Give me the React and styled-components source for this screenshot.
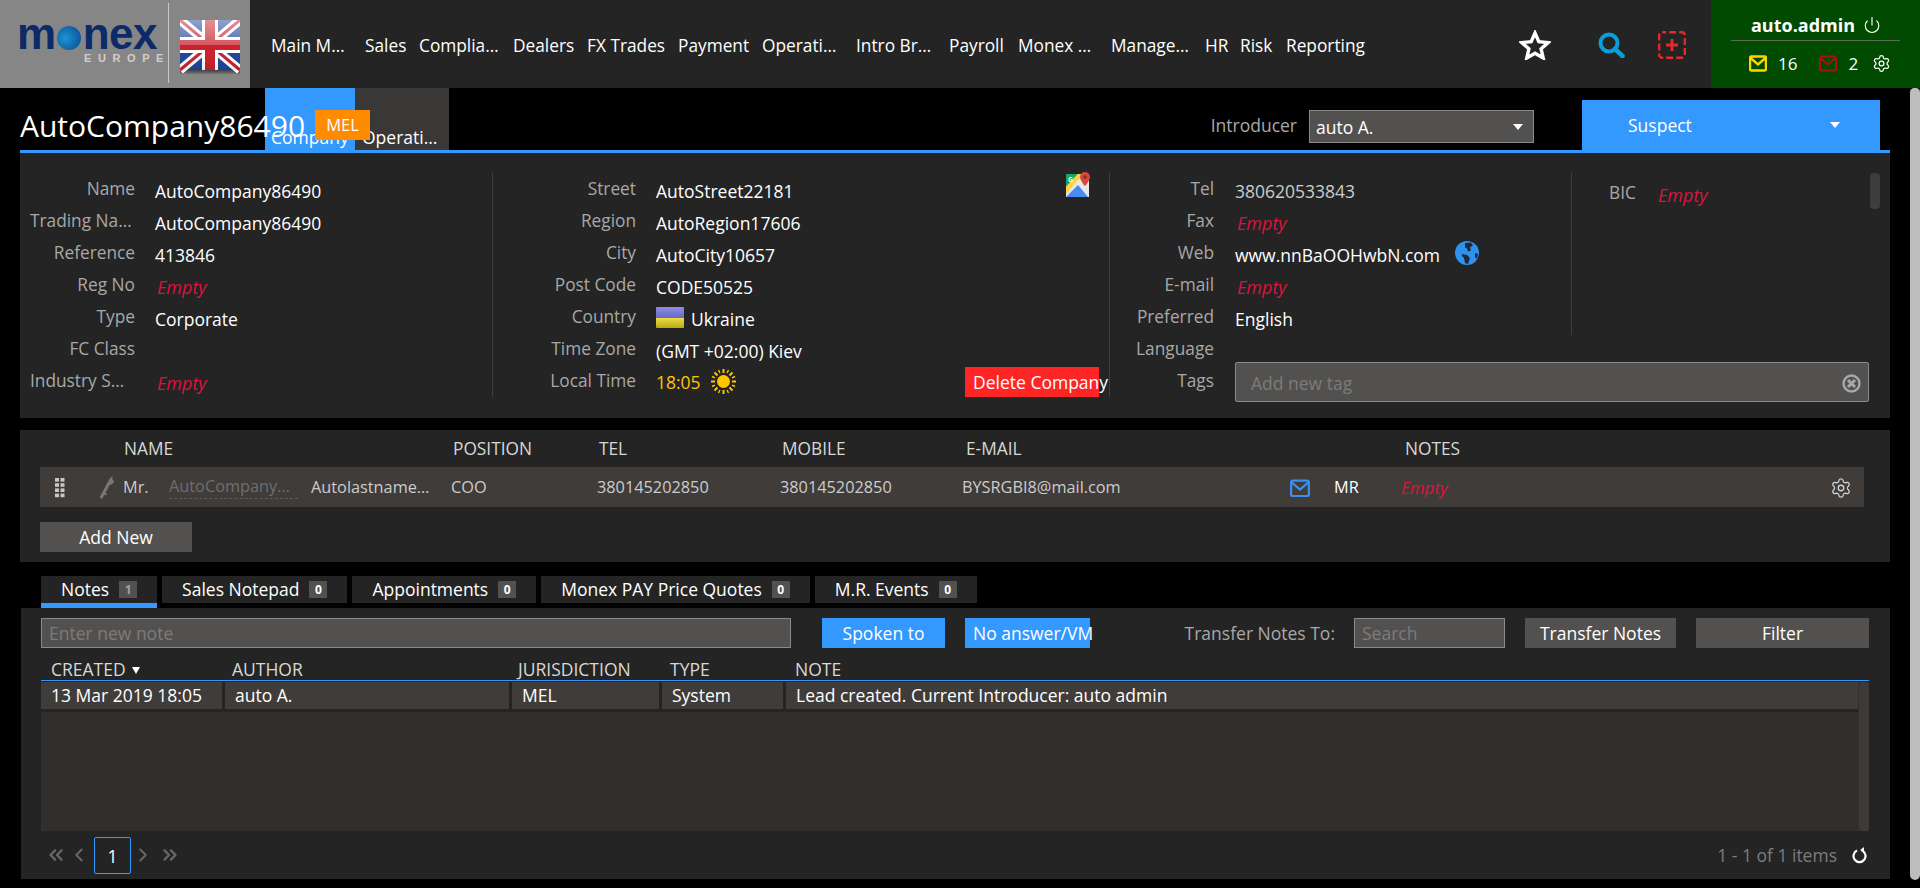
import React from "react";
import styled, { createGlobalStyle } from "styled-components";
import { ChevronLeft, ChevronRight, ChevronsLeft, ChevronsRight, Power, Settings } from "lucide-react";

const GlobalStyle = createGlobalStyle`
  html, body {
    margin: 0;
    height: 100%;
    overflow: hidden;
    background: #000;
  }
  body {
    font-family: "Open Sans", "Noto Sans", sans-serif;
    font-size: 17.5px;
    color: #fff;
  }
  * {
    box-sizing: border-box;
  }
`;

const Header = styled.header`
  display: flex;
  height: 88px;
  background: #242424;
`;

const Brand = styled.div`
  display: flex;
  flex: none;
  width: 250px;
  height: 88px;
  background: #868686;
`;

const LogoBox = styled.div`
  width: 169px;
  padding: 17px 0 0 17px;
  border-right: 1px solid #c8c8c8;
  margin: 3px 0 5px;
`;

const LogoWord = styled.div`
  display: flex;
  align-items: center;
  height: 28px;
  font-family: "Liberation Sans", sans-serif;
  font-weight: 700;
  font-size: 44px;
  line-height: 28px;
  letter-spacing: -0.5px;
  color: #0c2a68;
`;

const LogoDot = styled.span`
  width: 24px;
  height: 24px;
  margin: 8px 2px 0 1px;
  flex: none;
  border-radius: 50%;
  background: radial-gradient(circle at 35% 50%, #1a94d2, #0f5ea4 70%, #0c3f80);
`;

const LogoSub = styled.div`
  margin: 4px 0 0 67px;
  font-family: "Liberation Sans", sans-serif;
  font-size: 11px;
  font-weight: 700;
  letter-spacing: 6.6px;
  line-height: 12px;
  color: #cfcfcf;
`;

const FlagWrap = styled.div`
  margin: 20px 0 0 11px;
  line-height: 0;
`;

const Nav = styled.nav`
  display: flex;
  flex: 1;
  align-items: center;
  padding: 4px 0 0 16px;
`;

const NavItem = styled.div`
  flex: none;
  width: ${({ $w }) => ($w ? `${$w}px` : "auto")};
  padding: 0 5px;
  font-size: 17.3px;
  line-height: 22px;
  white-space: nowrap;
`;

const Tools = styled.div`
  display: flex;
  align-items: center;
  flex: none;
  padding: 2px 25px 0 0;
  line-height: 0;
`;

const ToolSlot = styled.div`
  margin-left: ${({ $gap }) => $gap}px;
  line-height: 0;
`;

const UserBox = styled.div`
  flex: none;
  width: 209px;
  background: #004b00;
  padding: 0 20px;
`;

const UserTop = styled.div`
  display: flex;
  align-items: center;
  height: 41px;
  padding: 9px 0 0 20px;
  border-bottom: 1px solid #5c6a5c;
  font-weight: 700;
  font-size: 18px;
  gap: 8px;
`;

const UserBottom = styled.div`
  display: flex;
  align-items: center;
  height: 44px;
  padding: 0 0 0 18px;
  font-size: 17px;
`;

const Count = styled.span`
  margin: 0 ${({ $right }) => $right}px 0 ${({ $left }) => $left}px;
`;

const Body = styled.div`
  display: flex;
  height: 800px;
`;

const Content = styled.main`
  flex: none;
  width: 1910px;
  padding: 0 20px;
`;

const ScrollTrack = styled.div`
  flex: none;
  width: 10px;
  height: 792px;
  background: #bdbdbd;
  border-radius: 5px 5px 6px 6px;
`;

const TitleBar = styled.div`
  display: flex;
  height: 62px;
`;

const TitleArea = styled.div`
  position: relative;
  z-index: 2;
  flex: none;
  width: 245px;
`;

const Title = styled.h1`
  margin: 0;
  padding-top: 19px;
  font-size: 30px;
  font-weight: 400;
  line-height: 38px;
  white-space: nowrap;
`;

const Badge = styled.div`
  position: absolute;
  left: 295px;
  top: 22px;
  width: 55px;
  height: 30px;
  background: #ff8c00;
  text-align: center;
  line-height: 30px;
  font-size: 16.5px;
`;

const PageTab = styled.div`
  flex: none;
  width: ${({ $w }) => $w}px;
  padding: 37px 0 0 ${({ $active }) => ($active ? "6px" : "7px")};
  line-height: 24px;
  overflow: hidden;
  white-space: nowrap;
  background: ${({ $active }) => ($active ? "#3399ff" : "#3a3836")};
`;

const IntroGroup = styled.div`
  display: flex;
  align-items: flex-start;
  margin-left: auto;
  padding-top: 22px;
`;

const IntroLabel = styled.span`
  margin-right: 12px;
  color: #a8a8a8;
  line-height: 30px;
`;

const Select = styled.div`
  display: flex;
  align-items: center;
  justify-content: space-between;
  width: 225px;
  height: 33px;
  padding: 0 10px 0 6px;
  background: #53514f;
  border: 1px solid #8a8a8a;
`;

const Caret = styled.span`
  width: 0;
  height: 0;
  border-left: 5px solid transparent;
  border-right: 5px solid transparent;
  border-top: 6px solid #fff;
`;

const StatusBox = styled.div`
  display: flex;
  align-items: center;
  justify-content: space-between;
  flex: none;
  width: 298px;
  height: 50px;
  margin: 12px 10px 0 48px;
  padding: 0 40px 0 46px;
  background: #3399ff;
`;

const InfoPanel = styled.section`
  display: flex;
  height: 268px;
  border-top: 3px solid #3399ff;
  padding-top: 20px;
  padding-right: 10px;
  background: #242424;
`;

const Column = styled.div`
  flex: none;
  width: ${({ $w }) => $w}px;
  height: ${({ $h }) => ($h ? `${$h}px` : "224px")};
  padding-top: ${({ $top }) => $top || 0}px;
  border-right: ${({ $line }) => ($line ? "1px solid #3e3e3e" : "none")};
`;

const Row = styled.div`
  display: flex;
  align-items: flex-start;
  height: 32px;
`;

const Label = styled.div`
  flex: none;
  width: ${({ $w }) => $w}px;
  padding: 6px 0 0 ${({ $cut }) => ($cut ? 10 : 0)}px;
  text-align: ${({ $cut }) => ($cut ? "left" : "right")};
  font-size: 17.3px;
  color: #a8a8a8;
  line-height: 20px;
  white-space: nowrap;
`;

const Value = styled.div`
  display: flex;
  align-items: center;
  margin-left: ${({ $gap }) => $gap || 20}px;
  padding-top: ${({ $gold }) => ($gold ? 7 : 8)}px;
  line-height: 20px;
  white-space: nowrap;
  color: ${({ $dim, $gold }) => ($gold ? "#ffc400" : $dim ? "#cccccc" : "#fff")};
`;

const Empty = styled.span`
  margin-left: ${({ $small }) => ($small ? 0 : 2)}px;
  font-style: italic;
  font-size: ${({ $small }) => ($small ? 17 : 18)}px;
  color: #dc143c;
`;

const InlineIcon = styled.span`
  margin: ${({ $m }) => $m};
  line-height: 0;
`;

const RowEnd = styled.div`
  margin: ${({ $top }) => $top}px ${({ $right }) => $right}px 0 auto;
  line-height: 0;
`;

const DangerButton = styled.div`
  width: 134px;
  height: 30px;
  padding-left: 8px;
  background: #ff2525;
  line-height: 30px;
  white-space: nowrap;
`;

const TagInput = styled.div`
  display: flex;
  align-items: center;
  justify-content: space-between;
  flex: none;
  width: 634px;
  height: 40px;
  margin: -3px 0 0 21px;
  padding: 2px 7px 0 15px;
  background: #53514f;
  border: 1px solid #8a8a8a;
  border-radius: 2px;
  color: #7c7c7c;
`;

const SideColumn = styled.div`
  display: flex;
  flex: none;
  width: 309px;
  height: 162px;
  border-left: 1px solid #3e3e3e;
`;

const SideThumb = styled.div`
  flex: none;
  width: 10px;
  height: 36px;
  margin-left: auto;
  border-radius: 4px;
  background: #3d3d3d;
`;

const ContactPanel = styled.section`
  height: 132px;
  margin-top: 12px;
  padding: 0 26px 0 20px;
  background: #242424;
`;

const ContactHead = styled.div`
  display: grid;
  grid-template-columns: 84px 329px 146px 183px 184px 439px 1fr;
  align-items: center;
  height: 37px;
  font-size: 17.3px;
  color: #d8d8d8;
`;

const ContactRow = styled.div`
  display: grid;
  grid-template-columns: 45px 23px 46px 142px 140px 146px 183px 182px 328px 44px 67px 1fr 34px;
  align-items: center;
  height: 40px;
  padding-left: 15px;
  background: #403c3a;
  color: #cccccc;
  font-size: 16.3px;
  white-space: nowrap;
`;

const IconCell = styled.div`
  display: flex;
  align-items: center;
  line-height: 0;
  padding-top: ${({ $top }) => $top || 0}px;
`;

const Muted = styled.span`
  width: 129px;
  padding-bottom: 1px;
  border-bottom: 1px dashed #5c5c5c;
  color: #6e6e6e;
`;

const Plain = styled.span`
  color: ${({ $white }) => ($white ? "#fff" : "#cccccc")};
`;

const GreyButton = styled.div`
  flex: none;
  width: ${({ $w }) => $w}px;
  height: 30px;
  margin: ${({ $m }) => $m || 0};
  background: #53514f;
  text-align: center;
  line-height: 30px;
`;

const TabStrip = styled.div`
  display: flex;
  gap: 5px;
  height: 32px;
  margin: 14px 0 0 21px;
`;

const NoteTab = styled.div`
  display: flex;
  align-items: center;
  gap: 10px;
  height: 32px;
  padding: 0 20px 7px;
  background: linear-gradient(#242424 27px, ${({ $active }) => ($active ? "#3399ff" : "#000")} 27px);
`;

const TabCount = styled.span`
  width: 18px;
  height: 17px;
  margin-top: 2px;
  background: #53514f;
  color: ${({ $active }) => ($active ? "#a0a0a0" : "#fff")};
  font-size: 12px;
  font-weight: 700;
  text-align: center;
  line-height: 18px;
`;

const NotesPanel = styled.section`
  height: 271px;
  margin-left: 1px;
  padding: 10px 21px 0 20px;
  background: #242424;
`;

const Toolbar = styled.div`
  display: flex;
  align-items: center;
  height: 30px;
`;

const TextBox = styled.div`
  flex: none;
  width: ${({ $w }) => $w}px;
  height: 30px;
  padding-left: 7px;
  background: #53514f;
  border: 1px solid #8a8a8a;
  color: #7c7c7c;
  line-height: 29px;
`;

const BlueButton = styled.div`
  flex: none;
  width: ${({ $w }) => $w}px;
  height: 30px;
  margin-left: ${({ $left }) => $left}px;
  padding-left: ${({ $pad }) => $pad || 0}px;
  background: #3399ff;
  text-align: ${({ $pad }) => ($pad ? "left" : "center")};
  line-height: 30px;
  white-space: nowrap;
`;

const TransferLabel = styled.span`
  margin: 0 19px 0 auto;
  color: #a8a8a8;
`;

const NotesHead = styled.div`
  display: grid;
  grid-template-columns: 181px 286px 152px 125px 1fr;
  align-items: center;
  height: 33px;
  margin-bottom: 1px;
  padding: 10px 0 0 10px;
  border-bottom: 1px solid #3399ff;
  color: #d8d8d8;
  line-height: 22px;
`;

const SortMark = styled.span`
  display: inline-block;
  width: 0;
  height: 0;
  margin-left: 6px;
  vertical-align: 2px;
  border-left: 4px solid transparent;
  border-right: 4px solid transparent;
  border-top: 7px solid #fff;
`;

const GridBody = styled.div`
  display: flex;
  height: 149px;
  background: #302f2d;
`;

const RowsArea = styled.div`
  flex: 1;
`;

const NoteRow = styled.div`
  display: grid;
  grid-template-columns: 181px 284px 147px 121px 1fr;
  gap: 3px;
  height: 30px;
  padding-bottom: 3px;
  background: #242424;
`;

const NoteCell = styled.div`
  padding-left: 10px;
  background: #403c3a;
  line-height: 27px;
  white-space: nowrap;
`;

const GridThumb = styled.div`
  flex: none;
  width: 10px;
  margin-left: 1px;
  border-radius: 4px;
  background: #3d3b39;
`;

const Pager = styled.div`
  display: flex;
  align-items: center;
  height: 48px;
  color: #666;
  line-height: 0;
`;

const PagerIcon = styled.span`
  margin: ${({ $m }) => $m};
  line-height: 0;
`;

const PageNumber = styled.div`
  width: 37px;
  height: 37px;
  margin: 0 1px 0 4px;
  border: 1px solid #3399ff;
  border-radius: 2px;
  color: #fff;
  text-align: center;
  line-height: 36px;
`;

const PagerInfo = styled.span`
  margin: 0 15px 0 auto;
  color: #7d7d7d;
  line-height: 20px;
`;

function UkFlag() {
  return (
    <svg width="60" height="54" viewBox="0 0 60 54">
      <defs>
        <linearGradient id="flagShade" x1="0" y1="0" x2="0" y2="1">
          <stop offset="0" stopColor="#fff" stopOpacity="0.5" />
          <stop offset="0.5" stopColor="#fff" stopOpacity="0.25" />
          <stop offset="0.51" stopColor="#fff" stopOpacity="0" />
          <stop offset="1" stopColor="#000" stopOpacity="0.08" />
        </linearGradient>
        <linearGradient id="flagFoot" x1="0" y1="0" x2="0" y2="1">
          <stop offset="0" stopColor="#333" />
          <stop offset="1" stopColor="#777" />
        </linearGradient>
      </defs>
      <rect x="0" y="49" width="60" height="5" fill="url(#flagFoot)" />
      <rect width="60" height="50" fill="#1d4597" />
      <path d="M0 0L60 50M60 0L0 50" stroke="#fff" strokeWidth="9" />
      <path d="M0 0L60 50M60 0L0 50" stroke="#c8202c" strokeWidth="3" />
      <path d="M30 0V50M0 25H60" stroke="#fff" strokeWidth="16" />
      <path d="M30 0V50M0 25H60" stroke="#c8202c" strokeWidth="10" />
      <rect width="60" height="50" fill="url(#flagShade)" />
    </svg>
  );
}

function StarIcon() {
  return (
    <svg width="32" height="30" viewBox="0 0 32 30">
      <path d="M16 3l3.8 8.7 9.4.9-7.1 6.2 2.1 9.2-8.2-4.8-8.2 4.8 2.1-9.2-7.1-6.2 9.4-.9z" fill="none" stroke="#fff" strokeWidth="3.4" strokeLinejoin="miter" />
    </svg>
  );
}

function SearchIcon() {
  return (
    <svg width="27" height="26" viewBox="0 0 27 26">
      <circle cx="11" cy="11" r="8.5" fill="none" stroke="#0a9fd8" strokeWidth="4" />
      <path d="M17 17l7.5 7" stroke="#0a9fd8" strokeWidth="4.5" strokeLinecap="round" />
    </svg>
  );
}

function AddIcon() {
  return (
    <svg width="28" height="28" viewBox="0 0 28 28">
      <rect x="1.2" y="1.2" width="25.6" height="25.6" rx="3" fill="none" stroke="#e02a2a" strokeWidth="2.4" strokeDasharray="7 3" strokeDashoffset="3" />
      <path d="M14 8v12M8 14h12" stroke="#e02a2a" strokeWidth="3" />
    </svg>
  );
}

function MailIcon({ color, size = 18, weight = 2 }) {
  return (
    <svg width={size} height={(size * 17) / 18} viewBox="0 0 18 17">
      <rect x="1" y="1.5" width="16" height="14" rx="1.5" fill="none" stroke={color} strokeWidth={weight} />
      <path d="M1.5 3l7.5 6.5L16.5 3" fill="none" stroke={color} strokeWidth={weight} />
    </svg>
  );
}

function MapPinIcon() {
  return (
    <svg width="25" height="25" viewBox="0 0 25 25">
      <rect y="2" width="23" height="23" fill="#e8e8e8" />
      <path d="M0 2h12L0 15z" fill="#1ea362" />
      <path d="M0 25L12 13l10 12z" fill="#4a8af4" />
      <path d="M0 15L12 2h5L0 22z" fill="#ffd23f" />
      <path d="M19 0a5 5 0 0 1 5 5c0 4-5 9-5 9s-5-5-5-9a5 5 0 0 1 5-5z" fill="#d9483b" />
      <circle cx="19" cy="5" r="1.8" fill="#8a2a22" />
      <text x="2" y="10" fontFamily="Open Sans" fontSize="7" fontWeight="700" fill="#fff">G</text>
    </svg>
  );
}

function UaFlag() {
  return (
    <svg width="28" height="21" viewBox="0 0 28 21">
      <defs>
        <linearGradient id="uaShade" x1="0" y1="0" x2="0" y2="1">
          <stop offset="0" stopColor="#8e8ee6" />
          <stop offset="0.5" stopColor="#6a6ac8" />
          <stop offset="0.51" stopColor="#f0e040" />
          <stop offset="1" stopColor="#b8a818" />
        </linearGradient>
      </defs>
      <rect width="28" height="21" rx="1" fill="url(#uaShade)" />
    </svg>
  );
}

function SunIcon() {
  return (
    <svg width="25" height="25" viewBox="0 0 25 25">
      <circle cx="12.5" cy="12.5" r="6.5" fill="#ffc400" />
      <g stroke="#ffc400" strokeWidth="2">
        <path d="M12.5 0v4M12.5 21v4M0 12.5h4M21 12.5h4M3.5 3.5l3 3M18.5 18.5l3 3M21.5 3.5l-3 3M6.5 18.5l-3 3" />
        <path d="M7.5 1l1.4 3M16.1 21l1.4 3M1 7.5l3 1.4M21 16.1l3 1.4M17.5 1l-1.4 3M8.9 21l-1.4 3M24 7.5l-3 1.4M4 16.1l-3 1.4" strokeWidth="1.4" />
      </g>
    </svg>
  );
}

function GlobeIcon() {
  return (
    <svg width="24" height="24" viewBox="0 0 24 24">
      <circle cx="12" cy="12" r="12" fill="#2f93ee" />
      <path d="M10 2l6-.5 2 3-3 2 1 3-3 1-1-3-2-1zM7 13l5 1 3 3-2 6-3-1-1-5-2-2zM20 12l3 1-1 5-2-2z" fill="#1f2a38" />
    </svg>
  );
}

function ClearIcon() {
  return (
    <svg width="19" height="19" viewBox="0 0 19 19">
      <circle cx="9.5" cy="9.5" r="8" fill="none" stroke="#a8a8a8" strokeWidth="2.4" />
      <path d="M6 6l7 7M13 6l-7 7" stroke="#a8a8a8" strokeWidth="3" />
    </svg>
  );
}

function DragIcon() {
  const dots = [];
  for (let r = 0; r < 4; r++) {
    for (let c = 0; c < 2; c++) {
      dots.push(<rect key={`${r}-${c}`} x={c * 5.5} y={r * 5.2} width="4" height="3.6" fill="#c8c8c8" />);
    }
  }
  return (
    <svg width="10" height="20" viewBox="0 0 10 20">
      {dots}
    </svg>
  );
}

function KeyIcon() {
  return (
    <svg width="14" height="24" viewBox="0 0 14 24">
      <path d="M1.5 22L9 8" stroke="#777" strokeWidth="3" strokeLinecap="round" />
      <path d="M9 10c-2-3 0-7 4-9-1 2-1 3 0 4l1 1c0 2-2 4-5 4z" fill="#777" />
      <path d="M3.5 18l3 1.5" stroke="#777" strokeWidth="2" />
    </svg>
  );
}

function RefreshIcon() {
  return (
    <svg width="15" height="17" viewBox="0 0 15 17">
      <path d="M5 3.6a6 6 0 1 0 5 0" fill="none" stroke="#fff" strokeWidth="2.2" />
      <path d="M10 0v6l3.8-3z" fill="#fff" transform="rotate(180 11 3)" />
    </svg>
  );
}

const navItems = [
  { label: "Main M…", w: 94 },
  { label: "Sales", w: 54 },
  { label: "Complia…", w: 94 },
  { label: "Dealers", w: 74 },
  { label: "FX Trades", w: 91 },
  { label: "Payment", w: 84 },
  { label: "Operati…", w: 94 },
  { label: "Intro Br…", w: 93 },
  { label: "Payroll", w: 69 },
  { label: "Monex …", w: 93 },
  { label: "Manage…", w: 94 },
  { label: "HR", w: 35 },
  { label: "Risk", w: 46 },
  { label: "Reporting" },
];

const noteTabs = [
  { label: "Notes", count: 1, active: true },
  { label: "Sales Notepad", count: 0 },
  { label: "Appointments", count: 0 },
  { label: "Monex PAY Price Quotes", count: 0 },
  { label: "M.R. Events", count: 0 },
];

function Field({ label, w, children, gap, dim, gold, end, cut }) {
  return (
    <Row>
      <Label $w={w} $cut={cut}>{label}</Label>
      {children !== undefined && (
        <Value $gap={gap} $dim={dim} $gold={gold}>
          {children}
        </Value>
      )}
      {end}
    </Row>
  );
}

export default function App() {
  return (
    <>
      <GlobalStyle />
      <Header>
        <Brand>
          <LogoBox>
            <LogoWord>
              m<LogoDot />nex
            </LogoWord>
            <LogoSub>EUROPE</LogoSub>
          </LogoBox>
          <FlagWrap>
            <UkFlag />
          </FlagWrap>
        </Brand>
        <Nav>
          {navItems.map((item) => (
            <NavItem key={item.label} $w={item.w}>
              {item.label}
            </NavItem>
          ))}
        </Nav>
        <Tools>
          <ToolSlot $gap={0}>
            <StarIcon />
          </ToolSlot>
          <ToolSlot $gap={47}>
            <SearchIcon />
          </ToolSlot>
          <ToolSlot $gap={33}>
            <AddIcon />
          </ToolSlot>
        </Tools>
        <UserBox>
          <UserTop>
            auto.admin
            <Power size={18} strokeWidth={1.5} color="#fff" />
          </UserTop>
          <UserBottom>
            <MailIcon color="#ffd500" weight={2.4} />
            <Count $left={11} $right={22}>16</Count>
            <MailIcon color="#a81212" />
            <Count $left={11} $right={14}>2</Count>
            <Settings size={19} strokeWidth={1.6} color="#fff" />
          </UserBottom>
        </UserBox>
      </Header>

      <Body>
        <Content>
          <TitleBar>
            <TitleArea>
              <Title>AutoCompany86490</Title>
              <Badge>MEL</Badge>
            </TitleArea>
            <PageTab $active $w={90}>Company</PageTab>
            <PageTab $w={94}>Operati…</PageTab>
            <IntroGroup>
              <IntroLabel>Introducer</IntroLabel>
              <Select>
                auto A.
                <Caret />
              </Select>
            </IntroGroup>
            <StatusBox>
              Suspect
              <Caret />
            </StatusBox>
          </TitleBar>

          <InfoPanel>
            <Column $w={473} $line>
              <Field w={115} label="Name">AutoCompany86490</Field>
              <Field w={115} cut label="Trading Na…">AutoCompany86490</Field>
              <Field w={115} label="Reference">413846</Field>
              <Field w={115} label="Reg No"><Empty>Empty</Empty></Field>
              <Field w={115} label="Type">Corporate</Field>
              <Field w={115} label="FC Class" />
              <Field w={115} cut label="Industry S…"><Empty>Empty</Empty></Field>
            </Column>
            <Column $w={617} $line>
              <Field w={143} label="Street" end={<RowEnd $top={-1} $right={18}><MapPinIcon /></RowEnd>}>AutoStreet22181</Field>
              <Field w={143} label="Region">AutoRegion17606</Field>
              <Field w={143} label="City">AutoCity10657</Field>
              <Field w={143} label="Post Code">CODE50525</Field>
              <Field w={143} label="Country">
                <InlineIcon $m="-4px 7px 0 0"><UaFlag /></InlineIcon>
                Ukraine
              </Field>
              <Field w={143} label="Time Zone">(GMT +02:00) Kiev</Field>
              <Field
                w={143}
                gold
                label="Local Time"
                end={
                  <RowEnd $top={2} $right={10}>
                    <DangerButton>Delete Company</DangerButton>
                  </RowEnd>
                }
              >
                18:05
                <InlineIcon $m="-3px 0 -2px 10px"><SunIcon /></InlineIcon>
              </Field>
            </Column>
            <Column $w={461}>
              <Field w={104} gap={21} dim label="Tel">380620533843</Field>
              <Field w={104} gap={21} label="Fax"><Empty>Empty</Empty></Field>
              <Field w={104} gap={21} label="Web">
                www.nnBaOOHwbN.com
                <InlineIcon $m="-4px 0 0 15px"><GlobeIcon /></InlineIcon>
              </Field>
              <Field w={104} gap={21} label="E-mail"><Empty>Empty</Empty></Field>
              <Field w={104} gap={21} label="Preferred">English</Field>
              <Field w={104} label="Language" />
              <Row>
                <Label $w={104}>Tags</Label>
                <TagInput>
                  Add new tag
                  <ClearIcon />
                </TagInput>
              </Row>
            </Column>
            <SideColumn>
              <Column $w={280} $h={40} $top={4}>
                <Field w={64} gap={20} label="BIC"><Empty>Empty</Empty></Field>
              </Column>
              <SideThumb />
            </SideColumn>
          </InfoPanel>

          <ContactPanel>
            <ContactHead>
              <span />
              <span>NAME</span>
              <span>POSITION</span>
              <span>TEL</span>
              <span>MOBILE</span>
              <span>E-MAIL</span>
              <span>NOTES</span>
            </ContactHead>
            <ContactRow>
              <IconCell $top={2}><DragIcon /></IconCell>
              <IconCell><KeyIcon /></IconCell>
              <Plain>Mr.</Plain>
              <Muted>AutoCompany…</Muted>
              <Plain>Autolastname…</Plain>
              <Plain>COO</Plain>
              <Plain>380145202850</Plain>
              <Plain>380145202850</Plain>
              <Plain>BYSRGBI8@mail.com</Plain>
              <IconCell $top={2}><MailIcon color="#3a8ff0" size={20} /></IconCell>
              <Plain $white>MR</Plain>
              <Empty $small>Empty</Empty>
              <IconCell $top={2}><Settings size={22} strokeWidth={1.4} color="#cfd6dc" /></IconCell>
            </ContactRow>
            <GreyButton $w={152} $m="15px 0 0">Add New</GreyButton>
          </ContactPanel>

          <TabStrip>
            {noteTabs.map((tab) => (
              <NoteTab key={tab.label} $active={tab.active}>
                {tab.label}
                <TabCount $active={tab.active}>{tab.count}</TabCount>
              </NoteTab>
            ))}
          </TabStrip>

          <NotesPanel>
            <Toolbar>
              <TextBox $w={750}>Enter new note</TextBox>
              <BlueButton $w={123} $left={31}>Spoken to</BlueButton>
              <BlueButton $w={125} $left={20} $pad={8}>No answer/VM</BlueButton>
              <TransferLabel>Transfer Notes To:</TransferLabel>
              <TextBox $w={151}>Search</TextBox>
              <GreyButton $w={151} $m="0 0 0 20px">Transfer Notes</GreyButton>
              <GreyButton $w={173} $m="0 0 0 20px">Filter</GreyButton>
            </Toolbar>
            <NotesHead>
              <span>CREATED<SortMark /></span>
              <span>AUTHOR</span>
              <span>JURISDICTION</span>
              <span>TYPE</span>
              <span>NOTE</span>
            </NotesHead>
            <GridBody>
              <RowsArea>
                <NoteRow>
                  <NoteCell>13 Mar 2019 18:05</NoteCell>
                  <NoteCell>auto A.</NoteCell>
                  <NoteCell>MEL</NoteCell>
                  <NoteCell>System</NoteCell>
                  <NoteCell>Lead created. Current Introducer: auto admin</NoteCell>
                </NoteRow>
              </RowsArea>
              <GridThumb />
            </GridBody>
            <Pager>
              <PagerIcon $m="0 0 0 4px"><ChevronsLeft size={22} strokeWidth={2.6} /></PagerIcon>
              <PagerIcon $m="0 0 0 1px"><ChevronLeft size={22} strokeWidth={2.2} /></PagerIcon>
              <PageNumber>1</PageNumber>
              <PagerIcon $m="0"><ChevronRight size={22} strokeWidth={2.2} /></PagerIcon>
              <PagerIcon $m="0 0 0 5px"><ChevronsRight size={22} strokeWidth={2.6} /></PagerIcon>
              <PagerInfo>1 - 1 of 1 items</PagerInfo>
              <PagerIcon $m="0 2px 0 0"><RefreshIcon /></PagerIcon>
            </Pager>
          </NotesPanel>
        </Content>
        <ScrollTrack />
      </Body>
    </>
  );
}
